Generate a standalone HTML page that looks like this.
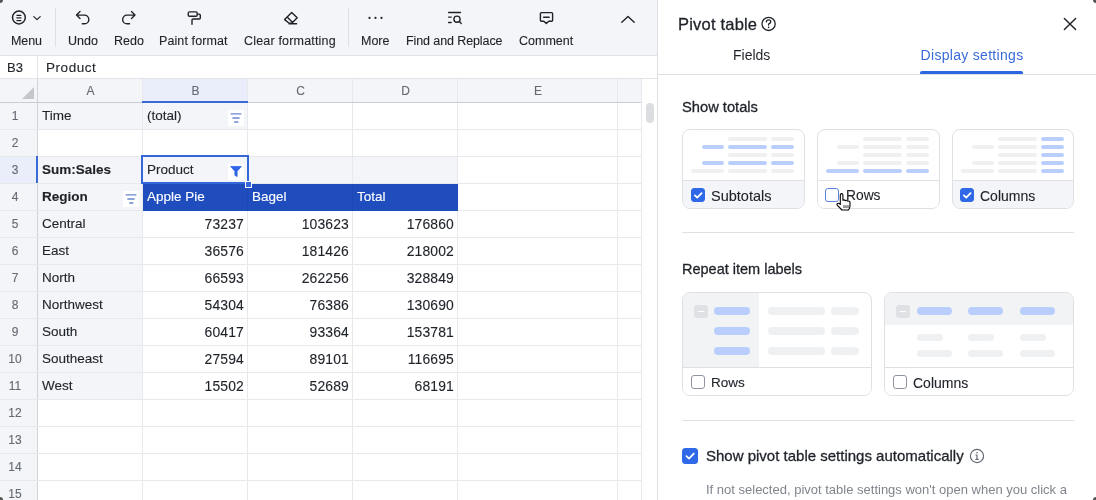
<!DOCTYPE html>
<html><head><meta charset="utf-8">
<style>
*{box-sizing:border-box;margin:0;padding:0}
html,body{width:1096px;height:500px;overflow:hidden;background:#fff;font-family:"Liberation Sans",sans-serif;color:#1f2329}
body{will-change:transform}
.tl,.c,.rh,.ch,.lt,#fbar div{-webkit-text-stroke:0.12px currentColor}
.a{position:absolute}
#toolbar{position:absolute;left:0;top:0;width:657px;height:56px;background:#f4f5f8;border-bottom:1px solid #e1e3e6}
.tl{position:absolute;top:33px;font-size:12.5px;line-height:16px;color:#1f2329;white-space:nowrap}
#fbar{position:absolute;left:0;top:56px;width:657px;height:23px;background:#fff;border-bottom:1px solid #e1e3e6}
.c{position:absolute;font-size:13.5px;white-space:nowrap;line-height:28px;height:27px;overflow:hidden}
.ch{position:absolute;top:79px;height:24px;font-size:12px;line-height:25px;text-align:center;color:#646a73;padding-left:2px}
.rh{position:absolute;left:0;width:30px;font-size:12px;line-height:28px;text-align:center;color:#646a73}
.hl{position:absolute;background:#e8e9ec}
#panel{position:absolute;left:657px;top:0;width:439px;height:500px;background:#fff;border-left:1px solid #dee0e3}
.p{position:absolute;white-space:nowrap}
.card{position:absolute;border:1px solid #dee0e3;border-radius:8px;overflow:hidden;background:#fff}
.bar{position:absolute;height:4px;border-radius:2px;background:#eff0f1}
.bb{background:#bacefd}
.lab{position:absolute;left:0;right:0;bottom:0;border-top:1px solid #dee0e3}
.cb{position:absolute;width:14px;height:14px;border-radius:3px;border:1px solid #8f959e;background:#fff}
.cbc{background:#2f69e8;border-color:#2f69e8}
.lt{position:absolute;font-size:14px;line-height:16px;color:#1f2329;white-space:nowrap}
</style></head><body>

<div id="toolbar">
<div class="tl" style="left:11px;letter-spacing:-0.1px">Menu</div>
<div class="tl" style="left:68px;letter-spacing:0px">Undo</div>
<div class="tl" style="left:114px;letter-spacing:0px">Redo</div>
<div class="tl" style="left:159px;letter-spacing:0.1px">Paint format</div>
<div class="tl" style="left:244px;letter-spacing:0.18px">Clear formatting</div>
<div class="tl" style="left:361px;letter-spacing:0px">More</div>
<div class="tl" style="left:406px;letter-spacing:-0.1px">Find and Replace</div>
<div class="tl" style="left:519px;letter-spacing:0px">Comment</div>
<div class="a" style="left:55px;top:8px;width:1px;height:39px;background:#dee0e3"></div>
<div class="a" style="left:348px;top:8px;width:1px;height:39px;background:#dee0e3"></div>
<svg class="a" style="left:0;top:0" width="657" height="55" fill="none" stroke="#1f2329" stroke-width="1.4" stroke-linecap="round" stroke-linejoin="round">
<circle cx="18.9" cy="17.5" r="6.4" stroke-width="1.5"/>
<path d="M16.9 15.3H20.9M16.9 17.9H20.9M16.9 20.5H20.9" stroke-width="1.25"/>
<path d="M33.8 16.6L37 19.6L40.2 16.6" stroke-width="1.2"/>
<path d="M80 11.6L76.5 15.1L80 18.6M76.7 15.1H84.5A4.35 4.35 0 0 1 84.5 23.8H82.3"/>
<path d="M131.5 11.6L135 15.1L131.5 18.6M134.8 15.1H127A4.35 4.35 0 0 0 127 23.8H129.5"/>
<rect x="188.2" y="11.9" width="9" height="4.4" rx="1.4"/>
<path d="M197.5 14.1H199.2Q200.3 14.1 200.3 15.2V17.9Q200.3 19 199.2 19H193Q192 19 192 20V24.3"/>
<path d="M291.7 12.4L297.2 17.8L291.8 23.3L289.2 23.3L284.6 19.6Z M287.4 17.2L292.6 22.5 M289 23.7H296.6"/>
<circle cx="369.5" cy="17.9" r="1.1" fill="#1f2329" stroke="none"/>
<circle cx="375.5" cy="17.9" r="1.1" fill="#1f2329" stroke="none"/>
<circle cx="381.5" cy="17.9" r="1.1" fill="#1f2329" stroke="none"/>
<path d="M448.6 12.5H460.5M448.6 17.1H451.2M448.6 22.5H451.2"/>
<circle cx="457" cy="19.2" r="3.1"/>
<path d="M459.4 21.6L461.2 23.5"/>
<path d="M541.4 12.6H551.6Q552.6 12.6 552.6 13.6V20.2Q552.6 21.2 551.6 21.2H548.8L546.3 23.4L543.8 21.2H541.4Q540.4 21.2 540.4 20.2V13.6Q540.4 12.6 541.4 12.6Z"/>
<path d="M543.6 17.2H549.2"/>
<path d="M621.8 22.3L628 16.5L634.2 22.3"/>
</svg>
</div>
<div id="fbar"><div class="a" style="left:7px;top:0;font-size:13px;line-height:23px;color:#1f2329">B3</div><div class="a" style="left:37px;top:0;width:1px;height:22px;background:#e1e3e6"></div><div class="a" style="left:46px;top:0;font-size:13.5px;line-height:23px;letter-spacing:0.55px">Product</div></div>
<div class="a" style="left:0;top:79px;width:641px;height:24px;background:#f4f5f8"></div>
<div class="a" style="left:142px;top:79px;width:105px;height:24px;background:#e9eefa"></div>
<div class="a" style="left:0;top:103px;width:37px;height:397px;background:#f4f5f8"></div>
<div class="a" style="left:0;top:156px;width:37px;height:27px;background:#e9eefa"></div>
<div class="a" style="left:37px;top:102px;width:105px;height:27px;background:#f4f5f8"></div>
<div class="a" style="left:142px;top:102px;width:105px;height:27px;background:#f4f5f8"></div>
<div class="a" style="left:37px;top:156px;width:105px;height:27px;background:#f4f5f8"></div>
<div class="a" style="left:142px;top:156px;width:105px;height:27px;background:#f4f5f8"></div>
<div class="a" style="left:247px;top:156px;width:105px;height:27px;background:#f4f5f8"></div>
<div class="a" style="left:352px;top:156px;width:105px;height:27px;background:#f4f5f8"></div>
<div class="a" style="left:37px;top:183px;width:105px;height:27px;background:#f4f5f8"></div>
<div class="a" style="left:37px;top:210px;width:105px;height:27px;background:#f4f5f8"></div>
<div class="a" style="left:37px;top:237px;width:105px;height:27px;background:#f4f5f8"></div>
<div class="a" style="left:37px;top:264px;width:105px;height:27px;background:#f4f5f8"></div>
<div class="a" style="left:37px;top:291px;width:105px;height:27px;background:#f4f5f8"></div>
<div class="a" style="left:37px;top:318px;width:105px;height:27px;background:#f4f5f8"></div>
<div class="a" style="left:37px;top:345px;width:105px;height:27px;background:#f4f5f8"></div>
<div class="a" style="left:37px;top:372px;width:105px;height:27px;background:#f4f5f8"></div>
<div class="hl" style="left:142px;top:79px;width:1px;height:421px"></div>
<div class="hl" style="left:247px;top:79px;width:1px;height:421px"></div>
<div class="hl" style="left:352px;top:79px;width:1px;height:421px"></div>
<div class="hl" style="left:457px;top:79px;width:1px;height:421px"></div>
<div class="hl" style="left:617px;top:79px;width:1px;height:421px"></div>
<div class="hl" style="left:641px;top:79px;width:1px;height:421px"></div>
<div class="hl" style="left:37px;top:79px;width:1px;height:421px;background:#d0d3d8"></div>
<div class="hl" style="left:0;top:102px;width:641px;height:1px"></div>
<div class="hl" style="left:0;top:129px;width:641px;height:1px"></div>
<div class="hl" style="left:0;top:156px;width:641px;height:1px"></div>
<div class="hl" style="left:0;top:183px;width:641px;height:1px"></div>
<div class="hl" style="left:0;top:210px;width:641px;height:1px"></div>
<div class="hl" style="left:0;top:237px;width:641px;height:1px"></div>
<div class="hl" style="left:0;top:264px;width:641px;height:1px"></div>
<div class="hl" style="left:0;top:291px;width:641px;height:1px"></div>
<div class="hl" style="left:0;top:318px;width:641px;height:1px"></div>
<div class="hl" style="left:0;top:345px;width:641px;height:1px"></div>
<div class="hl" style="left:0;top:372px;width:641px;height:1px"></div>
<div class="hl" style="left:0;top:399px;width:641px;height:1px"></div>
<div class="hl" style="left:0;top:426px;width:641px;height:1px"></div>
<div class="hl" style="left:0;top:453px;width:641px;height:1px"></div>
<div class="hl" style="left:0;top:480px;width:641px;height:1px"></div>
<div class="hl" style="left:0;top:507px;width:641px;height:1px"></div>
<div class="a" style="left:143px;top:184px;width:315px;height:27px;background:#1f4dbd"></div>
<div class="a" style="left:247px;top:184px;width:1px;height:27px;background:#1d49b5"></div><div class="a" style="left:352px;top:184px;width:1px;height:27px;background:#1d49b5"></div>
<div class="a" style="left:0;top:102px;width:641px;height:1px;background:#c9ccd1"></div>
<div class="a" style="left:142px;top:101px;width:106px;height:2px;background:#3a6ad6"></div>
<div class="a" style="left:36px;top:156px;width:2px;height:27px;background:#3a6ad6"></div>
<svg class="a" style="left:21px;top:86px" width="14" height="14"><path d="M13 1V13H1Z" fill="#c4c7cc"/></svg>
<div class="ch" style="left:37px;width:105px">A</div>
<div class="ch" style="left:142px;width:105px">B</div>
<div class="ch" style="left:247px;width:105px">C</div>
<div class="ch" style="left:352px;width:105px">D</div>
<div class="ch" style="left:457px;width:160px">E</div>
<div class="ch" style="left:617px;width:24px"></div>
<div class="rh" style="top:102px">1</div>
<div class="rh" style="top:129px">2</div>
<div class="rh" style="top:156px">3</div>
<div class="rh" style="top:183px">4</div>
<div class="rh" style="top:210px">5</div>
<div class="rh" style="top:237px">6</div>
<div class="rh" style="top:264px">7</div>
<div class="rh" style="top:291px">8</div>
<div class="rh" style="top:318px">9</div>
<div class="rh" style="top:345px">10</div>
<div class="rh" style="top:372px">11</div>
<div class="rh" style="top:399px">12</div>
<div class="rh" style="top:426px">13</div>
<div class="rh" style="top:453px">14</div>
<div class="rh" style="top:480px">15</div>
<div class="c" style="left:37px;top:102px;width:105px;padding-left:5px;">Time</div>
<div class="c" style="left:142px;top:102px;width:105px;padding-left:5px;">(total)</div>
<div class="c" style="left:37px;top:156px;width:105px;padding-left:5px;font-weight:bold;">Sum:Sales</div>
<div class="c" style="left:142px;top:156px;width:105px;padding-left:5px;">Product</div>
<div class="c" style="left:37px;top:183px;width:105px;padding-left:5px;font-weight:bold;">Region</div>
<div class="c" style="left:142px;top:183px;width:105px;padding-left:5px;color:#fff;">Apple Pie</div>
<div class="c" style="left:247px;top:183px;width:105px;padding-left:5px;color:#fff;">Bagel</div>
<div class="c" style="left:352px;top:183px;width:105px;padding-left:5px;color:#fff;">Total</div>
<div class="c" style="left:37px;top:210px;width:105px;padding-left:5px;">Central</div>
<div class="c" style="left:142px;top:210px;width:105px;text-align:right;padding-right:3px;font-size:13.9px;letter-spacing:0.15px;">73237</div>
<div class="c" style="left:247px;top:210px;width:105px;text-align:right;padding-right:3px;font-size:13.9px;letter-spacing:0.15px;">103623</div>
<div class="c" style="left:352px;top:210px;width:105px;text-align:right;padding-right:3px;font-size:13.9px;letter-spacing:0.15px;">176860</div>
<div class="c" style="left:37px;top:237px;width:105px;padding-left:5px;">East</div>
<div class="c" style="left:142px;top:237px;width:105px;text-align:right;padding-right:3px;font-size:13.9px;letter-spacing:0.15px;">36576</div>
<div class="c" style="left:247px;top:237px;width:105px;text-align:right;padding-right:3px;font-size:13.9px;letter-spacing:0.15px;">181426</div>
<div class="c" style="left:352px;top:237px;width:105px;text-align:right;padding-right:3px;font-size:13.9px;letter-spacing:0.15px;">218002</div>
<div class="c" style="left:37px;top:264px;width:105px;padding-left:5px;">North</div>
<div class="c" style="left:142px;top:264px;width:105px;text-align:right;padding-right:3px;font-size:13.9px;letter-spacing:0.15px;">66593</div>
<div class="c" style="left:247px;top:264px;width:105px;text-align:right;padding-right:3px;font-size:13.9px;letter-spacing:0.15px;">262256</div>
<div class="c" style="left:352px;top:264px;width:105px;text-align:right;padding-right:3px;font-size:13.9px;letter-spacing:0.15px;">328849</div>
<div class="c" style="left:37px;top:291px;width:105px;padding-left:5px;">Northwest</div>
<div class="c" style="left:142px;top:291px;width:105px;text-align:right;padding-right:3px;font-size:13.9px;letter-spacing:0.15px;">54304</div>
<div class="c" style="left:247px;top:291px;width:105px;text-align:right;padding-right:3px;font-size:13.9px;letter-spacing:0.15px;">76386</div>
<div class="c" style="left:352px;top:291px;width:105px;text-align:right;padding-right:3px;font-size:13.9px;letter-spacing:0.15px;">130690</div>
<div class="c" style="left:37px;top:318px;width:105px;padding-left:5px;">South</div>
<div class="c" style="left:142px;top:318px;width:105px;text-align:right;padding-right:3px;font-size:13.9px;letter-spacing:0.15px;">60417</div>
<div class="c" style="left:247px;top:318px;width:105px;text-align:right;padding-right:3px;font-size:13.9px;letter-spacing:0.15px;">93364</div>
<div class="c" style="left:352px;top:318px;width:105px;text-align:right;padding-right:3px;font-size:13.9px;letter-spacing:0.15px;">153781</div>
<div class="c" style="left:37px;top:345px;width:105px;padding-left:5px;">Southeast</div>
<div class="c" style="left:142px;top:345px;width:105px;text-align:right;padding-right:3px;font-size:13.9px;letter-spacing:0.15px;">27594</div>
<div class="c" style="left:247px;top:345px;width:105px;text-align:right;padding-right:3px;font-size:13.9px;letter-spacing:0.15px;">89101</div>
<div class="c" style="left:352px;top:345px;width:105px;text-align:right;padding-right:3px;font-size:13.9px;letter-spacing:0.15px;">116695</div>
<div class="c" style="left:37px;top:372px;width:105px;padding-left:5px;">West</div>
<div class="c" style="left:142px;top:372px;width:105px;text-align:right;padding-right:3px;font-size:13.9px;letter-spacing:0.15px;">15502</div>
<div class="c" style="left:247px;top:372px;width:105px;text-align:right;padding-right:3px;font-size:13.9px;letter-spacing:0.15px;">52689</div>
<div class="c" style="left:352px;top:372px;width:105px;text-align:right;padding-right:3px;font-size:13.9px;letter-spacing:0.15px;">68191</div>
<div class="a" style="left:228px;top:110px;width:16px;height:16px;background:#fff"></div><svg class="a" style="left:228px;top:110px" width="16" height="16" stroke="#6a88cf" stroke-width="1.3" fill="none"><path d="M2.6 3.8H13.4M4.4 8H11.6M6.2 12H10.4"/></svg>
<div class="a" style="left:123px;top:191px;width:16px;height:16px;background:#fff"></div><svg class="a" style="left:123px;top:191px" width="16" height="16" stroke="#6a88cf" stroke-width="1.3" fill="none"><path d="M2.6 3.8H13.4M4.4 8H11.6M6.2 12H10.4"/></svg>
<div class="a" style="left:228px;top:164px;width:16px;height:16px;background:#fff"></div>
<svg class="a" style="left:228px;top:163px" width="16" height="18"><path d="M2.6 3.4H13.4L9.1 8.3V13.6L6.9 12.2V8.3Z" fill="#2f64e6" stroke="#2f64e6" stroke-width="0.8" stroke-linejoin="round"/></svg>
<div class="a" style="left:141px;top:155px;width:108px;height:29px;border:2px solid #3467d8"></div>
<div class="a" style="left:245px;top:181px;width:7px;height:7px;background:#3467d8;border:1px solid #fff"></div>
<div class="a" style="left:646px;top:103px;width:8px;height:20px;border-radius:4px;background:#dcdde0"></div>
<div id="panel"><div class="p" style="left:20px;top:15px;font-size:16.5px;line-height:19px;letter-spacing:0.2px;color:#1f2329;-webkit-text-stroke:0.3px #1f2329">Pivot table</div>
<svg class="a" style="left:0;top:0" width="439" height="80" fill="none" stroke="#1f2329" stroke-width="1.3" stroke-linecap="round"><circle cx="110.6" cy="23.9" r="6.6"/><path d="M108.4 21.9Q108.4 19.8 110.6 19.8Q112.8 19.8 112.8 21.8Q112.8 23.2 110.6 24V25"/><circle cx="110.6" cy="27.4" r="0.8" fill="#1f2329" stroke="none"/><path d="M406.4 18.6L417.6 29.6M417.6 18.6L406.4 29.6" stroke-width="1.45"/></svg>
<div class="p" style="left:75px;top:47px;font-size:14px;line-height:16px;color:#1f2329">Fields</div>
<div class="p" style="left:262.6px;top:47px;font-size:14px;line-height:16px;color:#3a6bd9;letter-spacing:0.3px">Display settings</div>
<div class="a" style="left:0;top:74px;width:439px;height:1px;background:#dee0e3"></div>
<div class="a" style="left:262px;top:71px;width:103px;height:3px;border-radius:2px 2px 0 0;background:#2d66e3"></div>
<div class="p" style="left:24px;top:99px;font-size:14.7px;line-height:17px;color:#1f2329;-webkit-text-stroke:0.3px #1f2329">Show totals</div>
<div class="card" style="left:24px;top:129px;width:123px;height:80px"><div class="bar" style="left:44.5px;top:7px;width:39.5px"></div><div class="bar" style="left:87.5px;top:7px;width:23.5px"></div><div class="bar bb" style="left:18.5px;top:15px;width:22.5px"></div><div class="bar bb" style="left:44.5px;top:15px;width:39.5px"></div><div class="bar bb" style="left:87.5px;top:15px;width:23.5px"></div><div class="bar" style="left:44.5px;top:23px;width:39.5px"></div><div class="bar" style="left:87.5px;top:23px;width:23.5px"></div><div class="bar bb" style="left:18.5px;top:31px;width:22.5px"></div><div class="bar bb" style="left:44.5px;top:31px;width:39.5px"></div><div class="bar bb" style="left:87.5px;top:31px;width:23.5px"></div><div class="bar" style="left:8px;top:39px;width:33px"></div><div class="bar" style="left:44.5px;top:39px;width:39.5px"></div><div class="bar" style="left:87.5px;top:39px;width:23.5px"></div><div class="lab" style="height:28px;background:#f4f5f8"></div><div class="cb cbc" style="left:8px;top:58px;"><svg width="12" height="12" style="position:absolute;left:0;top:0"><path d="M2.9 6.4L5.2 8.6L9.6 4.1" stroke="#fff" stroke-width="1.8" fill="none" stroke-linecap="round" stroke-linejoin="round"/></svg></div><div class="lt" style="left:28px;top:58px;font-size:14.5px">Subtotals</div></div>
<div class="card" style="left:159px;top:129px;width:123px;height:80px"><div class="bar" style="left:44.5px;top:7px;width:39.5px"></div><div class="bar" style="left:87.5px;top:7px;width:23.5px"></div><div class="bar" style="left:18.5px;top:15px;width:22.5px"></div><div class="bar" style="left:44.5px;top:15px;width:39.5px"></div><div class="bar" style="left:87.5px;top:15px;width:23.5px"></div><div class="bar" style="left:44.5px;top:23px;width:39.5px"></div><div class="bar" style="left:87.5px;top:23px;width:23.5px"></div><div class="bar" style="left:18.5px;top:31px;width:22.5px"></div><div class="bar" style="left:44.5px;top:31px;width:39.5px"></div><div class="bar" style="left:87.5px;top:31px;width:23.5px"></div><div class="bar bb" style="left:8px;top:39px;width:33px"></div><div class="bar bb" style="left:44.5px;top:39px;width:39.5px"></div><div class="bar bb" style="left:87.5px;top:39px;width:23.5px"></div><div class="lab" style="height:28px;background:#fff"></div><div class="cb" style="left:7px;top:58px;border-color:#5a82dc;"></div><div class="lt" style="left:28px;top:58px;font-size:13.8px">Rows</div></div>
<div class="card" style="left:294px;top:129px;width:122px;height:80px"><div class="bar" style="left:44.5px;top:7px;width:39.5px"></div><div class="bar bb" style="left:87.5px;top:7px;width:23.5px"></div><div class="bar" style="left:18.5px;top:15px;width:22.5px"></div><div class="bar" style="left:44.5px;top:15px;width:39.5px"></div><div class="bar bb" style="left:87.5px;top:15px;width:23.5px"></div><div class="bar" style="left:44.5px;top:23px;width:39.5px"></div><div class="bar bb" style="left:87.5px;top:23px;width:23.5px"></div><div class="bar" style="left:18.5px;top:31px;width:22.5px"></div><div class="bar" style="left:44.5px;top:31px;width:39.5px"></div><div class="bar bb" style="left:87.5px;top:31px;width:23.5px"></div><div class="bar" style="left:8px;top:39px;width:33px"></div><div class="bar" style="left:44.5px;top:39px;width:39.5px"></div><div class="bar bb" style="left:87.5px;top:39px;width:23.5px"></div><div class="lab" style="height:28px;background:#f4f5f8"></div><div class="cb cbc" style="left:7px;top:58px;"><svg width="12" height="12" style="position:absolute;left:0;top:0"><path d="M2.9 6.4L5.2 8.6L9.6 4.1" stroke="#fff" stroke-width="1.8" fill="none" stroke-linecap="round" stroke-linejoin="round"/></svg></div><div class="lt" style="left:27px;top:58px;font-size:14px">Columns</div></div>
<div class="a" style="left:24px;top:232px;width:392px;height:1px;background:#dee0e3"></div>
<div class="p" style="left:24px;top:261px;font-size:14.5px;line-height:17px;color:#1f2329;-webkit-text-stroke:0.3px #1f2329">Repeat item labels</div>
<div class="card" style="left:24px;top:292px;width:190px;height:104px"><div class="a" style="left:0;top:0;width:76px;height:75px;background:#f2f3f5"></div><div class="a" style="left:11px;top:12px;width:14px;height:13px;border-radius:3px;background:#dfe1e4"><div class="a" style="left:4px;top:6px;width:6px;height:1.2px;background:#fff"></div></div><div class="bar bb" style="left:31px;top:14px;width:36px;height:8px;border-radius:4px"></div><div class="bar" style="left:85px;top:14px;width:57px;height:8px;border-radius:4px"></div><div class="bar" style="left:148px;top:14px;width:28px;height:8px;border-radius:4px"></div><div class="bar bb" style="left:31px;top:34px;width:36px;height:8px;border-radius:4px"></div><div class="bar" style="left:85px;top:34px;width:57px;height:8px;border-radius:4px"></div><div class="bar" style="left:148px;top:34px;width:28px;height:8px;border-radius:4px"></div><div class="bar bb" style="left:31px;top:54px;width:36px;height:8px;border-radius:4px"></div><div class="bar" style="left:85px;top:54px;width:57px;height:8px;border-radius:4px"></div><div class="bar" style="left:148px;top:54px;width:28px;height:8px;border-radius:4px"></div><div class="lab" style="height:28px;background:#fff"></div><div class="cb" style="left:8px;top:82px;width:14px;height:14px"></div><div class="lt" style="left:28px;top:82px;font-size:13.5px">Rows</div></div>
<div class="card" style="left:226px;top:292px;width:190px;height:104px"><div class="a" style="left:0;top:0;width:190px;height:32px;background:#f2f3f5"></div><div class="a" style="left:11px;top:12px;width:14px;height:13px;border-radius:3px;background:#dfe1e4"><div class="a" style="left:4px;top:6px;width:6px;height:1.2px;background:#fff"></div></div><div class="bar bb" style="left:32px;top:14px;width:35px;height:8px;border-radius:4px"></div><div class="bar" style="left:32px;top:41px;width:26px;height:7px;border-radius:3.5px"></div><div class="bar" style="left:32px;top:57px;width:35px;height:7px;border-radius:3.5px"></div><div class="bar bb" style="left:83px;top:14px;width:35px;height:8px;border-radius:4px"></div><div class="bar" style="left:83px;top:41px;width:26px;height:7px;border-radius:3.5px"></div><div class="bar" style="left:83px;top:57px;width:35px;height:7px;border-radius:3.5px"></div><div class="bar bb" style="left:135px;top:14px;width:35px;height:8px;border-radius:4px"></div><div class="bar" style="left:135px;top:41px;width:26px;height:7px;border-radius:3.5px"></div><div class="bar" style="left:135px;top:57px;width:35px;height:7px;border-radius:3.5px"></div><div class="lab" style="height:28px;background:#fff"></div><div class="cb" style="left:8px;top:82px;width:14px;height:14px"></div><div class="lt" style="left:28px;top:82px">Columns</div></div>
<div class="a" style="left:24px;top:420px;width:392px;height:1px;background:#dee0e3"></div>
<div class="cb cbc" style="left:24px;top:448px;width:16px;height:16px;border-radius:3px"><svg width="14" height="14" style="position:absolute;left:0;top:0"><path d="M3.4 7.2L6 9.6L10.8 4.6" stroke="#fff" stroke-width="1.7" fill="none" stroke-linecap="round" stroke-linejoin="round"/></svg></div>
<div class="p" style="left:48px;top:447px;font-size:15px;line-height:18px;color:#1f2329;-webkit-text-stroke:0.3px #1f2329">Show pivot table settings automatically</div>
<svg class="a" style="left:311px;top:448px" width="16" height="16" fill="none" stroke="#646a73" stroke-width="1.2"><circle cx="8" cy="8" r="6.6"/><path d="M8 7V11.3M6.8 11.3H9.2M7 7H8" stroke-linecap="round"/><circle cx="8" cy="4.8" r="0.8" fill="#646a73" stroke="none"/></svg>
<div class="p" style="left:48px;top:482px;font-size:13px;line-height:16px;color:#80858d">If not selected, pivot table settings won't open when you click a</div>
<svg class="a" style="left:176px;top:192px" width="20" height="20"><path d="M6.3 12.5V3.2Q6.3 1.6 7.6 1.6Q8.9 1.6 8.9 3.2V8.2Q10.3 7.4 11.3 8.6Q12.7 7.8 13.7 9.1Q15.2 8.6 16 10V13.8Q16 16.6 14.4 18H8L3.4 13.4Q2.4 12.2 3.5 11.5Q4.8 10.8 6.3 12.5Z" fill="#fff" stroke="#000" stroke-width="1.1" stroke-linejoin="round"/><path d="M10 13.2V16M12 13.2V16M14 13.2V16" stroke="#000" stroke-width="0.8"/></svg></div>
<div class="a" style="left:-3px;top:-3px;width:6px;height:6px;border-radius:3px;background:#555"></div><div class="a" style="left:1093px;top:-3px;width:6px;height:6px;border-radius:3px;background:#555"></div><div class="a" style="left:-3px;top:497px;width:6px;height:6px;border-radius:3px;background:#555"></div><div class="a" style="left:1093px;top:497px;width:6px;height:6px;border-radius:3px;background:#555"></div>
</body></html>
